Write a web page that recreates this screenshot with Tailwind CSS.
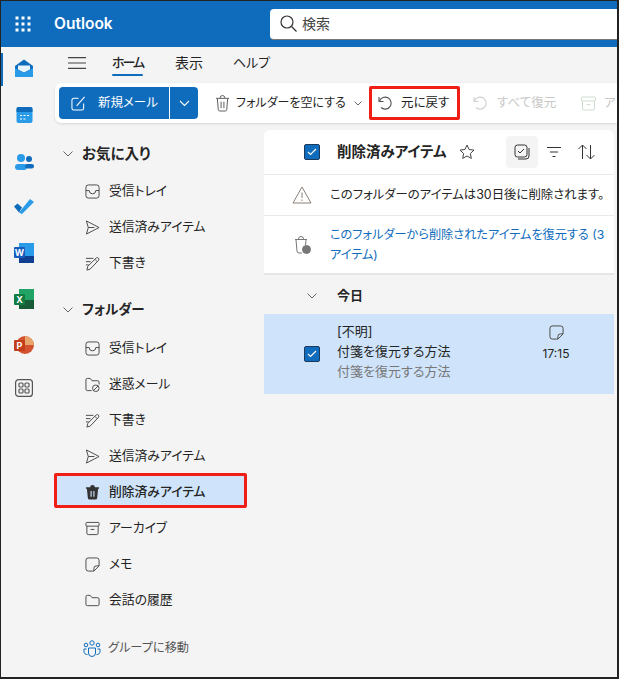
<!DOCTYPE html>
<html lang="ja">
<head>
    <meta charset="UTF-8">
    <meta name="viewport" content="width=device-width, initial-scale=1.0">
    <title>Outlook</title>
    <script src="https://cdn.jsdelivr.net/npm/@tailwindcss/browser@4"></script>
</head>
<body class="overflow-hidden">
<div class="w-[619px] h-[679px] overflow-hidden flex flex-col bg-[#f4f4f4] border-t border-l border-b-2 border-r-2 border-[#222] text-[#242424] font-['Inter','Noto_Sans_CJK_JP',sans-serif] text-[13px] [font-feature-settings:'palt']">

    <!-- top bar -->
    <header class="h-[46px] shrink-0 bg-[#0f6cbd] flex items-center">
        <div class="w-[43px] flex justify-center">
            <svg class="shrink-0" width="16" height="16" viewBox="0 0 16 16" fill="#fff">
                <rect x="0.500" y="0.500" width="3" height="3"/><rect x="6.500" y="0.500" width="3" height="3"/><rect x="12.500" y="0.500" width="3" height="3"/>
                <rect x="0.500" y="6.500" width="3" height="3"/><rect x="6.500" y="6.500" width="3" height="3"/><rect x="12.500" y="6.500" width="3" height="3"/>
                <rect x="0.500" y="12.500" width="3" height="3"/><rect x="6.500" y="12.500" width="3" height="3"/><rect x="12.500" y="12.500" width="3" height="3"/>
            </svg>
        </div>
        <span class="ml-[10px] w-[216px] text-white text-[15.5px] font-semibold">Outlook</span>
        <div class="flex-1 h-[31px] bg-white rounded-l flex items-center pl-[10px] gap-[5px] border-b border-[#777]">
            <svg class="shrink-0" width="17" height="17" viewBox="0 0 17 17" fill="none" stroke="#333" stroke-width="1.200"><circle cx="7" cy="7" r="6"/><path d="M11.500 11.500l5 5"/></svg>
            <span class="text-[14px] text-[#444]">検索</span>
        </div>
    </header>

    <div class="flex-1 flex min-h-0">
        <!-- app rail -->
        <nav class="w-[46px] shrink-0 relative flex flex-col items-center pt-[11px]">
            <div class="absolute left-0 top-[6px] w-[2px] h-[33px] bg-[#0f6cbd]"></div>
            <svg class="shrink-0" width="20" height="20" viewBox="0 0 20 20"><path d="M1 8l9-6.500L19 8v10a1 1 0 0 1-1 1H2a1 1 0 0 1-1-1z" fill="#0f6cbd"/><path d="M4 7.500h12v4l-6 3-6-3z" fill="#eaf4fc"/><path d="M1 10l9 5 9-5v8a1 1 0 0 1-1 1H2a1 1 0 0 1-1-1z" fill="#2a9be8"/></svg>
            <svg class="shrink-0 mt-[27px]" width="17" height="20" viewBox="0 0 17 20"><rect x="0.500" y="2" width="16" height="16" rx="2" fill="#2a9be8"/><path d="M0.500 7V4a2 2 0 0 1 2-2h12a2 2 0 0 1 2 2v3z" fill="#0f6cbd"/><path d="M4 10.500h2M7.500 10.500h2M11 10.500h2M4 14h2M7.500 14h2" stroke="#fff"/></svg>
            <svg class="shrink-0 mt-[27px]" width="19" height="20" viewBox="0 0 19 20"><circle cx="6" cy="6" r="4" fill="#2a9be8"/><circle cx="14" cy="7" r="3" fill="#0f6cbd"/><rect x="0" y="12" width="12" height="6" rx="3" fill="#2a9be8"/><rect x="10" y="12" width="9" height="4.500" rx="2.200" fill="#0f6cbd"/></svg>
            <svg class="shrink-0 mt-[24px]" width="20" height="20" viewBox="0 0 20 20"><path d="M0 10.500l3.500-3 4.500 4-3 5z" fill="#0f6cbd"/><path d="M5 16.500L16 3l4 3L8 18z" fill="#2a9be8"/></svg>
            <svg class="shrink-0 mt-[27px]" width="20" height="20" viewBox="0 0 20 20"><rect x="5" y="0" width="15" height="20" fill="#2a9be8"/><rect x="5" y="13" width="15" height="7" fill="#103f91"/><rect x="0" y="4" width="11" height="11" rx="1" fill="#185abd"/><text x="5.500" y="13" fill="#fff" font-size="9" font-weight="700" text-anchor="middle">W</text></svg>
            <svg class="shrink-0 mt-[26px]" width="20" height="20" viewBox="0 0 20 20"><rect x="5" y="0" width="15" height="20" fill="#21a366"/><rect x="5" y="11" width="15" height="9" fill="#185c37"/><rect x="0" y="5" width="11" height="11" rx="1" fill="#107c41"/><text x="5.500" y="14" fill="#fff" font-size="9" font-weight="700" text-anchor="middle">X</text></svg>
            <svg class="shrink-0 mt-[26px]" width="20" height="20" viewBox="0 0 20 20"><circle cx="11" cy="10" r="9" fill="#d35230"/><path d="M11 1a9 9 0 0 1 9 9h-9z" fill="#e8a66f"/><rect x="0" y="5" width="11" height="11" rx="1" fill="#c43e1c"/><text x="5.500" y="14" fill="#fff" font-size="9" font-weight="700" text-anchor="middle">P</text></svg>
            <svg class="shrink-0 mt-[24px]" width="18" height="18" viewBox="0 0 18 18" fill="none" stroke="#555" stroke-width="1.200"><rect x="0.600" y="0.600" width="16.800" height="16.800" rx="3"/><rect x="4" y="4" width="4" height="4" rx="1"/><rect x="10" y="4" width="4" height="4" rx="1"/><rect x="4" y="10" width="4" height="4" rx="1"/><rect x="10" y="10" width="4" height="4" rx="1"/></svg>
        </nav>

        <div class="flex-1 min-w-0 flex flex-col">
            <!-- tabs -->
            <div class="h-[36px] shrink-0 flex items-center text-[14px] pb-[5px] whitespace-nowrap">
                <svg class="ml-[21px] shrink-0" width="18" height="12" viewBox="0 0 18 12" stroke="#444" stroke-width="1.200"><path d="M0 .600h18M0 6h18M0 11.400h18"/></svg>
                <span class="ml-[26px] w-[31px] shrink-0 relative font-medium text-[13px] tracking-[-2px]">ホーム<span class="absolute left-0 right-0 top-[21px] h-[2px] rounded bg-[#0f6cbd]"></span></span>
                <span class="ml-[32px] w-[27px] shrink-0">表示</span>
                <span class="ml-[31px] text-[13px]">ヘルプ</span>
            </div>

            <!-- ribbon -->
            <div class="h-[40px] shrink-0 ml-[8px] bg-white rounded-l-md shadow-sm flex items-center pl-[4px] whitespace-nowrap text-[12.500px]">
                <div class="h-[32px] w-[139px] shrink-0 bg-[#0f6cbd] rounded text-white flex items-center">
                    <div class="w-[111px] shrink-0 h-full flex items-center pl-[12px] gap-[12px] border-r border-white">
                        <svg class="shrink-0" width="15" height="15" viewBox="0 0 16 16" fill="none" stroke="#fff" stroke-width="1.100"><path d="M8 2.500H3a2 2 0 0 0-2 2V13a2 2 0 0 0 2 2h8.500a2 2 0 0 0 2-2V8"/><path d="M6 10.500L14.500 1"/></svg>
                        <span>新規メール</span>
                    </div>
                    <svg class="ml-[9px] shrink-0" width="11" height="7" viewBox="0 0 11 7" fill="none" stroke="#fff" stroke-width="1.100"><path d="M1 1l4.500 4.500L10 1"/></svg>
                </div>
                <svg class="ml-[17px] shrink-0" width="15" height="17" viewBox="0 0 16 18" fill="none" stroke="#555" stroke-width="1"><path d="M1 3.500h14M5.500 3a2.500 2.500 0 0 1 5 0M2.500 4l1 11.500a1.500 1.500 0 0 0 1.500 1.500h6a1.500 1.500 0 0 0 1.500-1.500l1-11.500M6.500 7v7M9.500 7v7"/></svg>
                <span class="ml-[6px] w-[109px] shrink-0 text-[12px]">フォルダーを空にする</span>
                <svg class="ml-[9px] shrink-0" width="8" height="5" viewBox="0 0 8 5" fill="none" stroke="#666"><path d="M.5.500L4 4 7.500.500"/></svg>
                <div class="ml-[7px] w-[91px] h-[34px] shrink-0 border-[3px] border-[#f01e14] rounded-[2px] flex items-center pl-[6px] gap-[8px]">
                    <svg class="shrink-0" width="15" height="15" viewBox="0 0 15 15" fill="none" stroke="#555" stroke-width="1.100"><path d="M1 1v4.500h4.500"/><path d="M1.500 5A6 6 0 1 1 3 11.500"/></svg>
                    <span>元に戻す</span>
                </div>
                <svg class="ml-[13px] shrink-0" width="15" height="15" viewBox="0 0 15 15" fill="none" stroke="#d0d0d0" stroke-width="1.100"><path d="M1 1v4.500h4.500"/><path d="M1.500 5A6 6 0 1 1 3 11.500"/></svg>
                <span class="ml-[9px] w-[60px] shrink-0 text-[#c8c8c8]">すべて復元</span>
                <svg class="ml-[24px] shrink-0" width="15" height="15" viewBox="0 0 15 15" fill="none" stroke="#cfdccf"><rect x=".5" y="1" width="14" height="4" rx="1"/><path d="M1.500 5v8a1 1 0 0 0 1 1h10a1 1 0 0 0 1-1V5M5.500 8.500h4"/></svg>
                <span class="ml-[8px] text-[#c8c8c8]">ア</span>
            </div>

            <div class="flex-1 min-h-0 flex">
                <!-- folder pane -->
                <aside class="w-[217px] shrink-0 pt-[12px] text-[12.800px] whitespace-nowrap">
                    <div class="h-[37px] mb-[1px] flex items-center pl-[16px] font-semibold text-[14.500px]">
                        <svg class="shrink-0" width="10" height="6" viewBox="0 0 10 6" fill="none" stroke="#666"><path d="M.5.500L5 5 9.500.500"/></svg>
                        <span class="ml-[9px]">お気に入り</span>
                    </div>
                    <div class="h-[36px] flex items-center pl-[38px] gap-[9px]">
                        <svg class="shrink-0" width="15" height="15" viewBox="0 0 16 16" fill="none" stroke="#444"><rect x="1" y="1" width="14" height="14" rx="2.500"/><path d="M1 7h3.500a3.500 3.500 0 0 0 7 0H15"/></svg><span>受信トレイ</span>
                    </div>
                    <div class="h-[36px] flex items-center pl-[38px] gap-[9px]">
                        <svg class="shrink-0" width="15" height="15" viewBox="0 0 16 16" fill="none" stroke="#444"><path d="M1.500 1L15 8 1.500 15 3.500 8zM3.500 8H10"/></svg><span>送信済みアイテム</span>
                    </div>
                    <div class="h-[36px] flex items-center pl-[38px] gap-[9px]">
                        <svg class="shrink-0" width="15" height="15" viewBox="0 0 16 16" fill="none" stroke="#444"><path d="M1 2.500h8M1 6h5M1 9.500h3M2 15l1-4L12 2a1.800 1.800 0 0 1 2.500 2.500L5.500 14zM10.500 3.500l2.500 2.500"/></svg><span>下書き</span>
                    </div>

                    <div class="h-[37px] mt-[10px] mb-[2px] flex items-center pl-[16px] font-semibold text-[13.500px]">
                        <svg class="shrink-0" width="10" height="6" viewBox="0 0 10 6" fill="none" stroke="#666"><path d="M.5.500L5 5 9.500.500"/></svg>
                        <span class="ml-[9px]">フォルダー</span>
                    </div>
                    <div class="h-[36px] flex items-center pl-[38px] gap-[9px]">
                        <svg class="shrink-0" width="15" height="15" viewBox="0 0 16 16" fill="none" stroke="#444"><rect x="1" y="1" width="14" height="14" rx="2.500"/><path d="M1 7h3.500a3.500 3.500 0 0 0 7 0H15"/></svg><span>受信トレイ</span>
                    </div>
                    <div class="h-[36px] flex items-center pl-[38px] gap-[9px]">
                        <svg class="shrink-0" width="15" height="15" viewBox="0 0 16 16" fill="none" stroke="#444"><path d="M7 14.500H2.500a1.500 1.500 0 0 1-1.500-1.500V3a1.500 1.500 0 0 1 1.500-1.500h3L7.500 4h6a1.500 1.500 0 0 1 1.500 1.500V8"/><circle cx="11.500" cy="12" r="3.500"/><path d="M9 14.500l5-5"/></svg><span>迷惑メール</span>
                    </div>
                    <div class="h-[36px] flex items-center pl-[38px] gap-[9px]">
                        <svg class="shrink-0" width="15" height="15" viewBox="0 0 16 16" fill="none" stroke="#444"><path d="M1 2.500h8M1 6h5M1 9.500h3M2 15l1-4L12 2a1.800 1.800 0 0 1 2.500 2.500L5.500 14zM10.500 3.500l2.500 2.500"/></svg><span>下書き</span>
                    </div>
                    <div class="h-[36px] flex items-center pl-[38px] gap-[9px]">
                        <svg class="shrink-0" width="15" height="15" viewBox="0 0 16 16" fill="none" stroke="#444"><path d="M1.500 1L15 8 1.500 15 3.500 8zM3.500 8H10"/></svg><span>送信済みアイテム</span>
                    </div>
                    <div class="h-[35px] -mt-[1px] mb-[2px] ml-[7px] w-[193px] flex items-center pl-[28px] pt-[2px] gap-[9px] bg-[#cfe4fa] border-[3px] border-[#f01e14] rounded-[2px] font-medium">
                        <svg class="shrink-0" width="15" height="16" viewBox="0 0 16 16"><path d="M1 3h14v1.500h-1L13 14a2 2 0 0 1-2 2H5a2 2 0 0 1-2-2L2 4.500H1zM5.500 3a2.500 2.500 0 0 1 5 0z" fill="#333"/><path d="M6.500 7v6M9.500 7v6" stroke="#cfe4fa" stroke-width="1.200"/></svg><span>削除済みアイテム</span>
                    </div>
                    <div class="h-[36px] flex items-center pl-[38px] gap-[9px]">
                        <svg class="shrink-0" width="15" height="15" viewBox="0 0 16 16" fill="none" stroke="#444"><rect x="1" y="1.500" width="14" height="4" rx="1"/><path d="M2 5.500V13a1.500 1.500 0 0 0 1.500 1.500h9A1.500 1.500 0 0 0 14 13V5.500M6 9h4"/></svg><span>アーカイブ</span>
                    </div>
                    <div class="h-[36px] flex items-center pl-[38px] gap-[9px]">
                        <svg class="shrink-0" width="15" height="15" viewBox="0 0 16 16" fill="none" stroke="#444"><path d="M9.500 15H3.500A2.500 2.500 0 0 1 1 12.500v-9A2.500 2.500 0 0 1 3.500 1h9A2.500 2.500 0 0 1 15 3.500v6zM9.500 15v-3a2.500 2.500 0 0 1 2.500-2.500h3"/></svg><span>メモ</span>
                    </div>
                    <div class="h-[36px] flex items-center pl-[38px] gap-[9px]">
                        <svg class="shrink-0" width="15" height="15" viewBox="0 0 16 16" fill="none" stroke="#444"><path d="M1 4a1.500 1.500 0 0 1 1.500-1.500h3L7.500 5h6A1.500 1.500 0 0 1 15 6.500V12a1.500 1.500 0 0 1-1.500 1.500h-11A1.500 1.500 0 0 1 1 12z"/></svg><span>会話の履歴</span>
                    </div>
                    <div class="h-[36px] mt-[12px] flex items-center pl-[36px] gap-[7px] text-[#555] text-[12.200px]">
                        <svg class="shrink-0" width="18" height="18" viewBox="0 0 18 18" fill="none" stroke="#0f6cbd"><circle cx="9" cy="4" r="2.200"/><circle cx="3" cy="6" r="1.800"/><circle cx="15" cy="6" r="1.800"/><path d="M5.500 9h7v5a3.500 3.500 0 0 1-7 0zM3.500 10H1v2.500a3 3 0 0 0 3.500 3M14.500 10H17v2.500a3 3 0 0 1-3.500 3"/></svg><span>グループに移動</span>
                    </div>
                </aside>

                <!-- message list -->
                <main class="flex-1 min-w-0 flex flex-col pt-[7px] mr-[3px]">
                    <div class="bg-white rounded-tl-md rounded-tr-md">
                        <div class="h-[45px] border-b border-[#eaeaea] flex items-center pl-[40px]">
                            <span class="w-[16px] h-[16px] shrink-0 rounded-[2px] bg-[#0f6cbd] border border-[#1c3a5c] flex items-center justify-center">
                                <svg width="10" height="8" viewBox="0 0 10 8" fill="none" stroke="#fff" stroke-width="1.200"><path d="M1 4l2.500 2.500L9 1"/></svg>
                            </span>
                            <span class="ml-[17px] w-[110px] shrink-0 font-semibold text-[14.500px] whitespace-nowrap">削除済みアイテム</span>
                            <svg class="ml-[12px] shrink-0" width="16" height="16" viewBox="0 0 16 16" fill="none" stroke="#444"><path d="M8 1l2.100 4.500 4.900.600-3.600 3.400.900 4.900L8 12l-4.300 2.400.900-4.900L1 6.100l4.900-.600z"/></svg>
                            <div class="ml-[31px] w-[32px] h-[32px] shrink-0 bg-[#f4f4f4] rounded flex items-center justify-center">
                                <svg width="16" height="16" viewBox="0 0 16 16" fill="none" stroke="#333"><rect x="1" y="1" width="12" height="12" rx="2.500"/><path d="M4 7l2 2 4-4M15 4v8a3 3 0 0 1-3 3H4"/></svg>
                            </div>
                            <svg class="ml-[9px] shrink-0" width="14" height="10" viewBox="0 0 14 10" stroke="#333"><path d="M0 .500h14M3 5h8M5.500 9.500h3"/></svg>
                            <svg class="ml-[16px] shrink-0" width="19" height="16" viewBox="0 0 18 16" fill="none" stroke="#333"><path d="M5 15V1M1 5l4-4 4 4M13 1v14M9 11l4 4 4-4"/></svg>
                        </div>
                        <div class="h-[41px] border-b border-[#eaeaea] flex items-center pl-[28px] whitespace-nowrap">
                            <svg class="shrink-0" width="20" height="18" viewBox="0 0 20 18" fill="none" stroke="#8a8079"><path d="M10 1L19 17H1zM10 6.500v5.500M10 13.500v1.500"/></svg>
                            <span class="ml-[18px] text-[12.400px]">このフォルダーのアイテムは30日後に削除されます。</span>
                        </div>
                        <div class="h-[59px] border-b-2 border-[#e6e6e6] flex items-center pl-[30px]">
                            <svg class="shrink-0" width="17" height="18" viewBox="0 0 17 18" fill="none" stroke="#777"><path d="M1 3.500h12M4.500 3a2.500 2.500 0 0 1 5 0M2 4l1 11a2 2 0 0 0 2 2h3M12 4l-.500 5"/><circle cx="12.500" cy="13.500" r="4" fill="#777"/></svg>
                            <a class="ml-[19px] text-[#0f6cbd] leading-[20px] text-[12.200px]">このフォルダーから削除されたアイテムを復元する (3 アイテム)</a>
                        </div>
                    </div>
                    <div class="h-[39px] pt-[2px] flex items-center pl-[43px]">
                        <svg class="shrink-0" width="10" height="6" viewBox="0 0 10 6" fill="none" stroke="#666"><path d="M.5.500L5 5 9.500.500"/></svg>
                        <span class="ml-[20px] font-semibold">今日</span>
                    </div>
                    <div class="h-[80px] bg-[#cfe4fa] flex items-center pl-[40px]">
                        <span class="w-[16px] h-[16px] shrink-0 rounded-[2px] bg-[#0f6cbd] border border-[#1c3a5c] flex items-center justify-center">
                            <svg width="10" height="8" viewBox="0 0 10 8" fill="none" stroke="#fff" stroke-width="1.200"><path d="M1 4l2.500 2.500L9 1"/></svg>
                        </span>
                        <div class="ml-[17px] w-[205px] shrink-0 leading-[20px] text-[13px] -mt-[7px]">
                            <div>[不明]</div>
                            <div>付箋を復元する方法</div>
                            <div class="text-[#777]">付箋を復元する方法</div>
                        </div>
                        <div class="w-[28px] shrink-0 flex flex-col items-center gap-[5px] -mt-[20px]">
                            <svg class="shrink-0" width="15" height="15" viewBox="0 0 16 16" fill="none" stroke="#444"><path d="M9.500 15H3.500A2.500 2.500 0 0 1 1 12.500v-9A2.500 2.500 0 0 1 3.500 1h9A2.500 2.500 0 0 1 15 3.500v6zM9.500 15v-3a2.500 2.500 0 0 1 2.500-2.500h3"/></svg>
                            <span class="text-[12px]">17:15</span>
                        </div>
                    </div>
                </main>
            </div>
        </div>
    </div>
</div>
</body>
</html>
